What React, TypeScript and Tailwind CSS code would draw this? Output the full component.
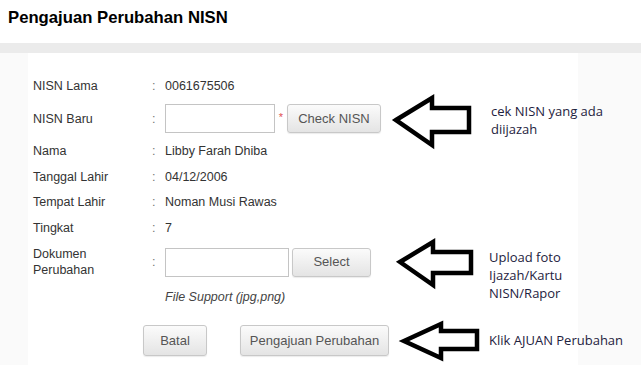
import React from "react";

const label = "text-[#333] text-[12.5px] leading-[16px]";

function Btn({ children, className = "" }: { children: React.ReactNode; className?: string }) {
  return (
    <div
      className={
        "flex items-center justify-center rounded-[3px] border border-[#c8c8c8] bg-gradient-to-b from-[#fbfbfb] to-[#e4e4e4] text-[13px] text-[#555] shadow-[0_1px_1px_rgba(0,0,0,0.08)] " +
        className
      }
    >
      {children}
    </div>
  );
}

function Row({ name, children, h }: { name: React.ReactNode; children: React.ReactNode; h: string }) {
  return (
    <div className={"flex items-center " + h}>
      <div className={"w-[119px] " + label}>{name}</div>
      <div className={"w-[13px] " + label + " text-[#777]"}>:</div>
      <div className={"flex items-center " + label}>{children}</div>
    </div>
  );
}

export default function App() {
  return (
    <div
      className="relative w-[641px] h-[365px] overflow-hidden bg-white"
      style={{ fontFamily: '"Liberation Sans", Arial, sans-serif' }}
    >
      <div className="h-[43px] pl-[8px] pt-[8px]">
        <h1 className="text-[16.7px] leading-[20px] font-bold text-black">Pengajuan Perubahan NISN</h1>
      </div>
      <div className="h-[10px] bg-[#ebebeb]" />
      <div className="flex h-[312px]">
        <div className="w-[28px] bg-[#fafafa]" />
        <div className="w-[550px] bg-white pl-[5px] pt-[20px] flex flex-col">
          <Row name="NISN Lama" h="h-[26px]">0061675506</Row>
          <Row name="NISN Baru" h="h-[39px]">
            <div className="w-[110px] h-[29px] border border-[#c4c4c4] bg-white" />
            <span className="w-[12px] text-center text-[#e05050] text-[11px] -mt-[4px]">*</span>
            <Btn className="w-[94px] h-[29px]">Check NISN</Btn>
          </Row>
          <Row name="Nama" h="h-[26px]">Libby Farah Dhiba</Row>
          <Row name="Tanggal Lahir" h="h-[25px]">04/12/2006</Row>
          <Row name="Tempat Lahir" h="h-[26px]">Noman Musi Rawas</Row>
          <Row name="Tingkat" h="h-[25px]">7</Row>
          <Row
            name={
              <>
                Dokumen
                <br />
                Perubahan
              </>
            }
            h="h-[44px]"
          >
            <div className="w-[124px] h-[29px] border border-[#c4c4c4] bg-white" />
            <Btn className="ml-[3px] w-[79px] h-[29px]">Select</Btn>
          </Row>
          <div className="h-[26px] pl-[132px] flex items-center">
            <span className="italic text-[12.5px] text-[#444]">File Support (jpg,png)</span>
          </div>
          <div className="mt-[15px] flex pl-[110px] gap-[33px]">
            <Btn className="w-[64px] h-[31px]">Batal</Btn>
            <Btn className="w-[149px] h-[31px]">Pengajuan Perubahan</Btn>
          </div>
        </div>
        <div className="flex-1 bg-[#fafafa]" />
      </div>

      {/* annotations */}
      <svg className="absolute inset-0 pointer-events-none" width="641" height="365">
        <g fill="none" stroke="#000" strokeWidth="4.5" strokeLinejoin="miter">
          <polygon points="396,120 432,98 432,108 469,108 469,132 432,132 432,145" />
          <polygon points="400,262 433,242 433,252 471,252 471,273 433,273 433,285" />
          <polygon points="404,341 441,324 441,331 477,331 477,349 441,349 441,358" />
        </g>
      </svg>
      <div
        className="absolute left-[491px] top-[102px] text-[13px] leading-[18px] text-[#1e2240]"
        style={{ fontFamily: '"Open Sans", sans-serif' }}
      >
        cek NISN yang ada
        <br />
        diijazah
      </div>
      <div
        className="absolute left-[489px] top-[248px] text-[13px] leading-[18px] text-[#1e2240]"
        style={{ fontFamily: '"Open Sans", sans-serif' }}
      >
        Upload foto
        <br />
        Ijazah/Kartu
        <br />
        NISN/Rapor
      </div>
      <div
        className="absolute left-[489px] top-[331px] text-[13px] leading-[18px] text-[#1e2240]"
        style={{ fontFamily: '"Open Sans", sans-serif' }}
      >
        Klik AJUAN Perubahan
      </div>
    </div>
  );
}
